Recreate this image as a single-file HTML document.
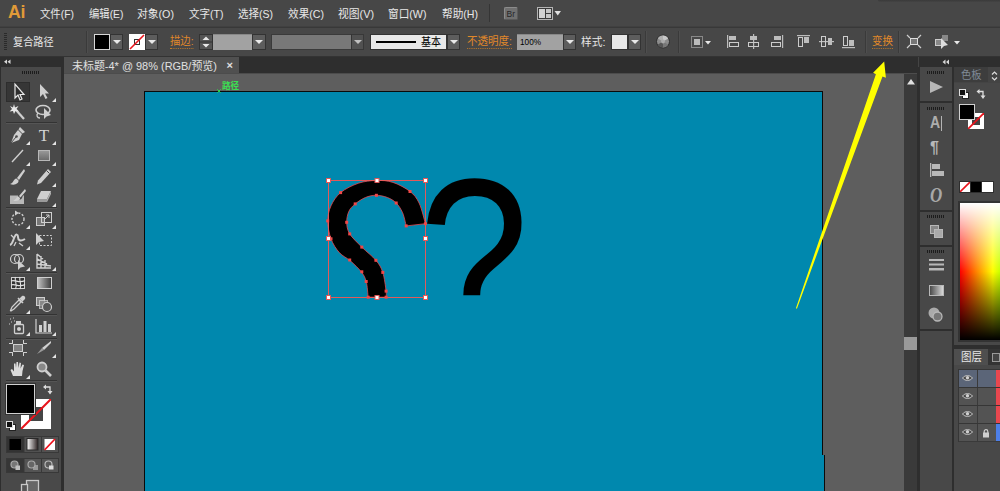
<!DOCTYPE html>
<html lang="zh-CN">
<head>
<meta charset="utf-8">
<title>Illustrator</title>
<style>
html,body{margin:0;padding:0;}
body{width:1000px;height:491px;overflow:hidden;background:#5e5e5e;position:relative;
 font-family:"Liberation Sans","Noto Sans CJK SC",sans-serif;font-size:11px;color:#e6e6e6;}
.a{position:absolute;}
.t{position:absolute;white-space:nowrap;line-height:14px;}
#menubar{left:0;top:0;width:1000px;height:27px;background:#474747;}
#ctrlbar{left:0;top:28px;width:1000px;height:28px;background:#474747;}
.menu{top:7px;font-size:11.5px;color:#e8e8e8;}
.or{color:#e0882a;border-bottom:1px dotted #c07a2a;line-height:13px;}
.sep{position:absolute;top:31px;width:1px;height:22px;background:#3a3a3a;border-right:1px solid #4e4e4e;}
.dd{position:absolute;background:#5d5d5d;border:1px solid #333;box-sizing:border-box;}
.dd:after{content:"";position:absolute;left:50%;top:50%;margin:-2px 0 0 -4px;border:4px solid transparent;border-top:4px solid #e8e8e8;border-bottom:0;}
.tool{position:absolute;width:24px;height:22px;}
.corner{position:absolute;width:0;height:0;border:2px solid transparent;border-right-color:#e4e4e4;border-bottom-color:#e4e4e4;margin:-1px 0 0 -1.5px;}
.grip{position:absolute;height:3px;width:18px;background:repeating-linear-gradient(90deg,#1c1c1c 0 1px,transparent 1px 2px);}
.hline{position:absolute;height:1px;background:#333;border-bottom:1px solid #555;}
</style>
</head>
<body>
<!-- canvas area -->
<div class="a" id="canvas" style="left:64px;top:74px;width:839px;height:417px;background:#5e5e5e;"></div>
<div class="a" id="artboard" style="left:144px;top:91px;width:677px;height:410px;background:#0088ae;border:1px solid #0a0a0a;"></div>
<div class="a" style="left:822px;top:455px;width:2px;height:40px;background:#0088ae;border-right:1px solid #0a0a0a;"></div>

<!-- artwork -->
<div class="a" style="left:400px;top:150px;width:150px;height:147.5px;overflow:hidden;"><div class="a" style="left:18.1px;top:-2.9px;font-family:'Liberation Sans',sans-serif;font-size:212px;line-height:212px;color:#000;transform:matrix(0.9325,0,0.02,1.0736,0,0);transform-origin:0 33px;">?</div></div>
<svg class="a" style="left:0;top:0;" width="1000" height="491" viewBox="0 0 1000 491">
<path d="M425.4 223.7 C424.4 220.2 421.7 208.4 419.1 203.0 C416.5 197.7 414.4 194.9 410.0 191.5 C405.7 188.0 398.5 184.2 392.9 182.4 C387.3 180.6 382.2 180.3 376.4 180.5 C370.7 180.6 364.5 181.2 358.5 183.2 C352.6 185.2 345.2 188.8 340.6 192.6 C336.1 196.3 333.2 201.1 331.0 205.8 C328.9 210.5 327.7 215.4 327.7 220.9 C327.7 226.4 329.1 233.5 331.0 238.8 C332.9 244.1 336.1 248.9 339.3 252.6 C342.5 256.2 346.6 257.6 350.3 260.8 C353.9 264.0 358.6 268.4 361.3 271.8 C363.9 275.3 365.1 277.3 366.2 281.5 C367.4 285.7 367.8 294.6 368.2 297.2 L386.1 297.2 C386.1 296.2 386.6 295.2 386.1 291.1 C385.5 287.0 384.5 277.5 382.8 272.4 C381.1 267.3 379.4 264.5 375.9 260.3 C372.4 256.1 366.2 251.5 361.8 247.1 C357.5 242.7 352.3 238.0 349.7 233.9 C347.2 229.7 346.8 226.1 346.7 222.3 C346.6 218.5 347.5 214.4 348.9 211.3 C350.3 208.2 352.5 206.2 355.2 203.9 C358.0 201.6 362.0 198.9 365.4 197.5 C368.9 196.1 372.2 195.3 375.9 195.3 C379.5 195.3 384.0 196.2 387.4 197.5 C390.8 198.8 393.7 200.5 396.2 203.0 C398.8 205.6 400.9 208.9 402.6 212.7 C404.2 216.5 405.6 223.7 406.2 225.9 Z" fill="#000" stroke="#e8474f" stroke-width="0.8"/>
<rect x="328.500" y="180.500" width="97" height="117" fill="none" stroke="#e25a5a" stroke-width="1"/>
<rect x="339.1" y="191.1" width="3" height="3" fill="#f04848"/>
<rect x="374.9" y="193.8" width="3" height="3" fill="#f04848"/>
<rect x="353.7" y="202.4" width="3" height="3" fill="#f04848"/>
<rect x="394.7" y="201.5" width="3" height="3" fill="#f04848"/>
<rect x="408.5" y="190.0" width="3" height="3" fill="#f04848"/>
<rect x="326.2" y="219.4" width="3" height="3" fill="#f04848"/>
<rect x="345.2" y="220.8" width="3" height="3" fill="#f04848"/>
<rect x="329.5" y="237.3" width="3" height="3" fill="#f04848"/>
<rect x="348.2" y="232.4" width="3" height="3" fill="#f04848"/>
<rect x="404.7" y="224.4" width="3" height="3" fill="#f04848"/>
<rect x="423.9" y="222.2" width="3" height="3" fill="#f04848"/>
<rect x="360.3" y="245.6" width="3" height="3" fill="#f04848"/>
<rect x="348.2" y="258.5" width="3" height="3" fill="#f04848"/>
<rect x="374.4" y="258.8" width="3" height="3" fill="#f04848"/>
<rect x="360.3" y="270.3" width="3" height="3" fill="#f04848"/>
<rect x="381.3" y="270.9" width="3" height="3" fill="#f04848"/>
<rect x="364.7" y="280.0" width="3" height="3" fill="#f04848"/>
<rect x="384.6" y="289.6" width="3" height="3" fill="#f04848"/>
<rect x="366.7" y="295.7" width="3" height="3" fill="#f04848"/>
<rect x="384.6" y="295.7" width="3" height="3" fill="#f04848"/>
<rect x="326.5" y="178.5" width="4" height="4" fill="#fff" stroke="#e25a5a" stroke-width="1"/>
<rect x="326.5" y="236.5" width="4" height="4" fill="#fff" stroke="#e25a5a" stroke-width="1"/>
<rect x="326.5" y="295.5" width="4" height="4" fill="#fff" stroke="#e25a5a" stroke-width="1"/>
<rect x="375.0" y="178.5" width="4" height="4" fill="#fff" stroke="#e25a5a" stroke-width="1"/>
<rect x="375.0" y="295.5" width="4" height="4" fill="#fff" stroke="#e25a5a" stroke-width="1"/>
<rect x="423.5" y="178.5" width="4" height="4" fill="#fff" stroke="#e25a5a" stroke-width="1"/>
<rect x="423.5" y="236.5" width="4" height="4" fill="#fff" stroke="#e25a5a" stroke-width="1"/>
<rect x="423.5" y="295.5" width="4" height="4" fill="#fff" stroke="#e25a5a" stroke-width="1"/>
<path d="M217.3 89.3 L220.700 92.700 M220.700 89.300 L217.300 92.700" stroke="#2fe04a" stroke-width="0.9"/>
<text x="222" y="88.6" font-size="8.6" font-weight="bold" fill="#3be052" font-family="Liberation Sans,Noto Sans CJK SC,sans-serif">路径</text>
</svg>
<!-- menubar -->
<div class="a" id="menubar"></div>
<div class="a" style="left:0;top:26px;width:1000px;height:1px;background:#404040;"></div><div class="a" style="left:0;top:27px;width:1000px;height:1px;background:#383838;"></div>
<div class="a" id="ctrlbar"></div>
<div class="a" style="left:878px;top:0;width:122px;height:2px;background:linear-gradient(180deg,#3a3a3a,#444);border-bottom-left-radius:3px;"></div>
<div class="a" style="left:0;top:56px;width:1000px;height:1px;background:#333;"></div>
<div class="t" style="left:7.5px;top:1px;font-size:19px;line-height:22px;font-weight:bold;color:#e09a38;letter-spacing:-0.2px;transform:scaleX(0.93);transform-origin:0 0;">Ai</div>
<div class="t menu" style="left:40.4px;transform:scaleX(0.902);transform-origin:0 0;">文件(F)</div>
<div class="t menu" style="left:89.0px;transform:scaleX(0.897);transform-origin:0 0;">编辑(E)</div>
<div class="t menu" style="left:137.4px;transform:scaleX(0.934);transform-origin:0 0;">对象(O)</div>
<div class="t menu" style="left:189.0px;transform:scaleX(0.915);transform-origin:0 0;">文字(T)</div>
<div class="t menu" style="left:238.0px;transform:scaleX(0.913);transform-origin:0 0;">选择(S)</div>
<div class="t menu" style="left:287.5px;transform:scaleX(0.924);transform-origin:0 0;">效果(C)</div>
<div class="t menu" style="left:337.5px;transform:scaleX(0.939);transform-origin:0 0;">视图(V)</div>
<div class="t menu" style="left:388.0px;transform:scaleX(0.927);transform-origin:0 0;">窗口(W)</div>
<div class="t menu" style="left:442.0px;transform:scaleX(0.924);transform-origin:0 0;">帮助(H)</div>

<!-- control bar items -->
<div class="t" style="left:13.0px;top:35px;font-size:11.5px;color:#e8e8e8;transform:scaleX(0.883);transform-origin:0 0;">复合路径</div>


<!-- control bar widgets -->
<div class="a" style="left:4px;top:33px;width:3px;height:18px;background:repeating-linear-gradient(180deg,#2a2a2a 0 1px,transparent 1px 2px);"></div>
<div class="sep" style="left:86px;"></div>
<div class="a" style="left:94px;top:34px;width:14px;height:14px;background:#000;border:1px solid #d8d8d8;"></div>
<div class="dd" style="left:110px;top:34px;width:13px;height:16px;"></div>
<div class="a" style="left:129px;top:34px;width:16px;height:16px;background:#fff;"><svg width="16" height="16" style="display:block"><rect x="5.5" y="5.5" width="5" height="5" fill="none" stroke="#333" stroke-width="1"/><line x1="1" y1="15" x2="15" y2="1" stroke="#e8141c" stroke-width="1.6"/></svg></div>
<div class="dd" style="left:145px;top:34px;width:13px;height:16px;"></div>
<div class="t or" style="left:170.0px;top:35px;font-size:11.5px;transform:scaleX(0.901);transform-origin:0 0;">描边:</div>
<div class="a" style="left:199px;top:34px;width:14px;height:16px;background:#555;border:1px solid #333;box-sizing:border-box;"><svg width="12" height="14" style="display:block"><rect x="0" y="6.5" width="12" height="1" fill="#333"/><path d="M2.5 5 L6 1.5 L9.5 5Z M2.5 9 L6 12.5 L9.5 9Z" fill="#e8e8e8"/></svg></div>
<div class="a" style="left:213px;top:34px;width:39px;height:16px;background:#a2a2a2;box-shadow:inset 0 1px 0 #888;"></div>
<div class="dd" style="left:252px;top:34px;width:14px;height:16px;"></div>
<div class="a" style="left:271px;top:34px;width:81px;height:16px;background:#787878;border:1px solid #3a3a3a;box-sizing:border-box;"></div>
<div class="dd" style="left:351px;top:34px;width:13px;height:16px;background:#555;opacity:.75"></div>
<div class="a" style="left:370px;top:34px;width:77px;height:16px;background:#e8e8e8;border:1px solid #333;box-sizing:border-box;"></div>
<div class="a" style="left:376px;top:41px;width:40px;height:1.5px;background:#000;"></div>
<div class="t" style="left:421.0px;top:35px;font-size:11.5px;color:#000;transform:scaleX(0.870);transform-origin:0 0;">基本</div>
<div class="dd" style="left:447px;top:34px;width:13px;height:16px;"></div>
<div class="t or" style="left:467.0px;top:35px;font-size:11.5px;transform:scaleX(0.915);transform-origin:0 0;">不透明度:</div>
<div class="a" style="left:517px;top:34px;width:46px;height:16px;background:#a2a2a2;box-shadow:inset 0 1px 0 #888;"></div>
<div class="t" style="left:520.0px;top:34.5px;font-size:9.5px;color:#000;transform:scaleX(0.865);transform-origin:0 0;">100%</div>
<div class="dd" style="left:563px;top:34px;width:13px;height:16px;"></div>
<div class="t" style="left:581.0px;top:35px;font-size:11.5px;color:#e8e8e8;transform:scaleX(0.931);transform-origin:0 0;">样式:</div>
<div class="a" style="left:611px;top:34px;width:17px;height:16px;background:#e8e8e8;border:1px solid #333;box-sizing:border-box;"></div>
<div class="dd" style="left:628px;top:34px;width:13px;height:16px;"></div>
<div class="sep" style="left:645px;"></div>
<svg class="a" style="left:655px;top:33px;" width="16" height="16"><circle cx="8" cy="8.5" r="6.5" fill="#8c8c8c" stroke="#2e2e2e"/><path d="M8 8.5 L8 2.5 A6 6 0 0 1 13.2 5.5Z" fill="#c8c8c8"/><path d="M8 8.5 L2.8 5.5 A6 6 0 0 1 8 2.5Z" fill="#b0b0b0"/><path d="M8 8.5 L13.2 11.5 A6 6 0 0 1 8 14.5Z" fill="#777"/><path d="M8 8.5 L2.8 11.5 A6 6 0 0 0 8 14.5Z" fill="#555"/><circle cx="8" cy="8.5" r="2" fill="#aaa"/></svg>
<div class="sep" style="left:678px;"></div>
<svg class="a" style="left:688px;top:33px;" width="26" height="18"><rect x="3.5" y="3.5" width="11" height="11" fill="none" stroke="#ccc" stroke-dasharray="1 1"/><rect x="6" y="6" width="6" height="6" fill="#bbb"/><path d="M17 8 L23 8 L20 11.5Z" fill="#e8e8e8"/></svg>
<!-- align icons -->
<svg class="a" style="left:725px;top:33px;" width="140" height="18" fill="#bdbdbd" stroke="none">
 <rect x="2" y="2" width="1.2" height="13"/><rect x="4" y="3" width="7" height="4"/><rect x="4.5" y="9.500" width="9" height="4" fill="none" stroke="#ccc"/>
 <rect x="28" y="1" width="1.2" height="15"/><rect x="25" y="3" width="7" height="4"/><rect x="23.500" y="9.500" width="10" height="4" fill="none" stroke="#ccc"/>
 <rect x="57" y="2" width="1.2" height="13"/><rect x="49" y="3" width="7" height="4"/><rect x="46.500" y="9.500" width="9" height="4" fill="none" stroke="#ccc"/>
 <rect x="72" y="2" width="13" height="1.2"/><rect x="79" y="4" width="5" height="6"/><rect x="73.500" y="4.500" width="4" height="9" fill="none" stroke="#ccc"/>
 <rect x="94" y="8" width="15" height="1.2"/><rect x="103" y="5" width="4" height="7"/><rect x="96.500" y="3.500" width="4" height="10" fill="none" stroke="#ccc"/>
 <rect x="117" y="14" width="13" height="1.2"/><rect x="124" y="7" width="5" height="6"/><rect x="118.500" y="3.500" width="4" height="9" fill="none" stroke="#ccc"/>
</svg>
<div class="sep" style="left:865px;"></div>
<div class="t or" style="left:872.0px;top:35px;font-size:11.5px;transform:scaleX(0.913);transform-origin:0 0;">变换</div>
<div class="sep" style="left:898px;"></div>
<svg class="a" style="left:906px;top:33px;" width="60" height="18"><rect x="4.500" y="5.500" width="7" height="6" fill="#777" stroke="#ddd"/><path d="M1 2 L4 5 M15 2 L12 5 M1 15 L4 12 M15 15 L12 12" stroke="#ccc" stroke-width="1.2"/>
 <rect x="29.500" y="6.500" width="6" height="6" fill="#888" stroke="#ccc"/><rect x="36" y="2" width="6" height="6" fill="#888"/><path d="M35 5 L35 16 L38 13 L42 12Z" fill="#ddd"/><path d="M48 8 L54 8 L51 11.500Z" fill="#e8e8e8"/></svg>
<!-- menubar right icons -->
<div class="a" style="left:489px;top:4px;width:1px;height:18px;background:#353535;"></div>
<div class="a" style="left:504px;top:7px;width:14px;height:13px;background:#707070;border:1px solid #8c8c8c;border-right-color:#5a5a5a;border-bottom-color:#5a5a5a;border-radius:2px;box-sizing:border-box;"></div>
<div class="t" style="left:506.5px;top:7.5px;font-size:8.5px;line-height:12px;color:#262626;">Br</div>
<svg class="a" style="left:537px;top:6px;" width="26" height="15"><rect x="0.5" y="1.5" width="15" height="12" fill="#3a3a3a" stroke="#b4b4b4"/><rect x="2" y="3" width="6" height="9" fill="#d2d2d2"/><rect x="9" y="3" width="5" height="4" fill="#c6c6c6"/><rect x="9" y="8" width="5" height="4" fill="#c6c6c6"/><path d="M17.5 5 L24 5 L20.750 9.500Z" fill="#e0e0e0"/></svg>

<!-- tab bar -->
<div class="a" style="left:62px;top:57px;width:858px;height:17px;background:#4c4c4c;"></div><div class="a" style="left:62px;top:57px;width:858px;height:16px;background:#2e2e2e;"></div>
<div class="a" style="left:64px;top:57px;width:175px;height:16px;background:#505050;"></div>
<div class="t" style="left:72.0px;top:59px;font-size:11.5px;color:#e0e0e0;transform:scaleX(0.952);transform-origin:0 0;">未标题-4* @ 98% (RGB/预览)</div>
<div class="t" style="left:226.5px;top:58px;font-size:11px;font-weight:bold;color:#e0e0e0;">×</div>

<!-- left toolbar -->
<div class="a" id="lpanel" style="left:0;top:57px;width:64px;height:434px;background:#2e2e2e;"></div>
<div class="a" style="left:1px;top:67px;width:60px;height:424px;background:#494949;"></div>

<!-- tools -->
<div class="a" style="left:0;top:57px;width:61px;height:10px;"><svg width="61" height="10" style="display:block"><path d="M7 2.500 L4 4.800 L7 7.100Z M10.500 2.500 L7.500 4.800 L10.500 7.100Z" fill="#d8d8d8"/></svg></div>
<div class="grip" style="left:22px;top:71px;"></div>
<div class="a" style="left:6px;top:82px;width:24px;height:20px;background:#363636;box-shadow:inset 0 0 0 1px #2d2d2d;"></div>
<div class="hline" style="left:6px;top:122px;width:51px;"></div>
<div class="hline" style="left:6px;top:207px;width:51px;"></div>
<div class="hline" style="left:6px;top:272px;width:51px;"></div>
<div class="hline" style="left:6px;top:314px;width:51px;"></div>
<div class="hline" style="left:6px;top:338px;width:51px;"></div>
<div class="hline" style="left:6px;top:380px;width:51px;"></div>
<svg class="a" style="left:7px;top:82px;" width="22" height="20" viewBox="0 0 22 20"><path d="M8 2 L8 16 L11 13 L13 18 L15 17 L13 12.500 L17 12.500Z" fill="#2e2e2e" stroke="#e8e8e8" stroke-width="1.2"/></svg>
<svg class="a" style="left:33px;top:82px;" width="22" height="20" viewBox="0 0 22 20"><path d="M7 2 L7 15 L10 12 L12.500 17 L14.500 16 L12 11.500 L16 11.500Z" fill="#cfcfcf"/></svg>
<div class="corner" style="left:53px;top:99px;"></div>
<svg class="a" style="left:7px;top:102px;" width="22" height="20" viewBox="0 0 22 20"><path d="M9 8 L17 17" stroke="#cfcfcf" stroke-width="2.2"/><path d="M7 2 L8 5.500 L11.500 4 L9.500 7 L12 9.500 L8.500 9 L7 12 L6 9 L2.500 9.500 L5 7 L3 4 L6 5.500Z" fill="#e8e8e8"/></svg>
<svg class="a" style="left:33px;top:102px;" width="22" height="20" viewBox="0 0 22 20"><ellipse cx="10" cy="8" rx="7" ry="4.500" fill="none" stroke="#cfcfcf" stroke-width="1.600"/><path d="M5 11 C3 13 4 16 7 16" fill="none" stroke="#cfcfcf" stroke-width="1.300"/><path d="M11 6 L11 17 L13.500 14.500 L18 13Z" fill="#cfcfcf"/></svg>
<svg class="a" style="left:7px;top:125px;" width="22" height="20" viewBox="0 0 22 20"><path d="M13 2 L18 7 L15.500 8.500 L11.500 4.500Z" fill="#cfcfcf"/><path d="M11 5 L15 9 L12 15 L4 18 L7 10Z" fill="#cfcfcf"/><circle cx="9.500" cy="11.500" r="1.300" fill="#494949"/><path d="M4 18 L9 12" stroke="#494949" stroke-width="1"/></svg>
<div class="corner" style="left:27px;top:142px;"></div>
<svg class="a" style="left:33px;top:125px;" width="22" height="20" viewBox="0 0 22 20"><text x="11" y="16" font-family="Liberation Serif,serif" font-size="17" fill="#d4d4d4" text-anchor="middle">T</text></svg>
<div class="corner" style="left:53px;top:142px;"></div>
<svg class="a" style="left:7px;top:146px;" width="22" height="20" viewBox="0 0 22 20"><path d="M5 16 L16 4" stroke="#cfcfcf" stroke-width="1.400"/></svg>
<div class="corner" style="left:27px;top:163px;"></div>
<svg class="a" style="left:33px;top:146px;" width="22" height="20" viewBox="0 0 22 20"><defs><linearGradient id="gr0" x2="0" y2="1"><stop offset="0" stop-color="#9a9a9a"/><stop offset="1" stop-color="#6a6a6a"/></linearGradient></defs><rect x="5.500" y="4.500" width="11" height="10" fill="url(#gr0)" stroke="#b8b8b8"/></svg>
<div class="corner" style="left:53px;top:163px;"></div>
<svg class="a" style="left:7px;top:167px;" width="22" height="20" viewBox="0 0 22 20"><path d="M17 2 L10 11 L12 13 L18 4Z" fill="#cfcfcf"/><path d="M9.500 11.500 C6 12 7 16 3 17 C8 19 12 16 11.500 13.500Z" fill="#cfcfcf"/></svg>
<svg class="a" style="left:33px;top:167px;" width="22" height="20" viewBox="0 0 22 20"><path d="M15 2 L18 5 L8 16 L4 17.500 L5 13.500Z" fill="#cfcfcf"/><path d="M13.500 3.500 L16.500 6.500" stroke="#494949" stroke-width="1"/></svg>
<div class="corner" style="left:53px;top:184px;"></div>
<svg class="a" style="left:7px;top:187px;" width="22" height="20" viewBox="0 0 22 20"><path d="M3 8.500 L11 8.500 L11 11 C11 13 14 13 15 11 L16 8.500 L17 8.500 L17 17 L3 17Z" fill="#b8b8b8"/><path d="M18 2 L12 9 L13.500 10.500 L19 4Z" fill="#cfcfcf"/><path d="M11.500 9.500 C9 10 9 13 6 13.500 C10 15 13.500 13 13 11Z" fill="#cfcfcf"/></svg>
<svg class="a" style="left:33px;top:187px;" width="22" height="20" viewBox="0 0 22 20"><path d="M8 4 L18 4 L14 12 L4 12Z" fill="#cfcfcf"/><path d="M4 12 L14 12 L14 15 L4 15Z" fill="#9a9a9a"/><path d="M14 12 L18 4 L18 7 L14 15Z" fill="#b0b0b0"/></svg>
<div class="corner" style="left:53px;top:204px;"></div>
<svg class="a" style="left:7px;top:209px;" width="22" height="20" viewBox="0 0 22 20"><circle cx="11" cy="10" r="6" fill="none" stroke="#cfcfcf" stroke-width="1.400" stroke-dasharray="2 1.500"/><path d="M8 1.500 L12 4 L8 6.500Z" fill="#cfcfcf"/></svg>
<div class="corner" style="left:27px;top:226px;"></div>
<svg class="a" style="left:33px;top:209px;" width="22" height="20" viewBox="0 0 22 20"><rect x="3.500" y="8.500" width="8" height="8" fill="#777" stroke="#cfcfcf"/><rect x="8.500" y="3.500" width="10" height="10" fill="none" stroke="#cfcfcf"/><path d="M12 10 L16 6 M13 6 L16 6 L16 9" stroke="#cfcfcf" fill="none"/></svg>
<div class="corner" style="left:53px;top:226px;"></div>
<svg class="a" style="left:7px;top:230px;" width="22" height="20" viewBox="0 0 22 20"><path d="M3 15 C6 14 6 9 8 6 C9 4 11 4 11 7 C11 10 13 12 18 9" fill="none" stroke="#cfcfcf" stroke-width="2"/><path d="M4 5 L7 8 M12 13 L16 16 M9 12 L7 16" stroke="#cfcfcf" stroke-width="1.300"/></svg>
<div class="corner" style="left:27px;top:247px;"></div>
<svg class="a" style="left:33px;top:230px;" width="22" height="20" viewBox="0 0 22 20"><rect x="6.500" y="5.500" width="12" height="10" fill="none" stroke="#cfcfcf" stroke-dasharray="2 1.500"/><path d="M3 3 L3 15 L6 12 L11 11Z" fill="#cfcfcf"/></svg>
<svg class="a" style="left:7px;top:251px;" width="22" height="20" viewBox="0 0 22 20"><circle cx="8" cy="8" r="4.500" fill="none" stroke="#cfcfcf" stroke-width="1.200"/><circle cx="12" cy="8" r="4.500" fill="none" stroke="#cfcfcf" stroke-width="1.200"/><path d="M11 9 L11 19 L13.500 16.500 L18 15.500Z" fill="#cfcfcf"/></svg>
<div class="corner" style="left:27px;top:268px;"></div>
<svg class="a" style="left:33px;top:251px;" width="22" height="20" viewBox="0 0 22 20"><path d="M4 3 L4 17 L18 17 M8 5 L8 17 M12 9 L12 17 M4 13 L18 15 M4 8 L14 13 M4 3 L10 8" fill="none" stroke="#cfcfcf" stroke-width="1.400"/></svg>
<div class="corner" style="left:53px;top:268px;"></div>
<svg class="a" style="left:7px;top:273px;" width="22" height="20" viewBox="0 0 22 20"><rect x="4.5" y="4.5" width="13" height="11" fill="#333" stroke="#cfcfcf"/><path d="M4 8 C8 6 12 11 18 7.5 M4 12 C8 10 12 15 18 11.5 M8.500 4 C7 8 11 11 8.500 16 M13 4 C11.500 8 15.500 11 13 16" fill="none" stroke="#e0e0e0" stroke-width="1.1"/></svg>
<svg class="a" style="left:33px;top:273px;" width="22" height="20" viewBox="0 0 22 20"><defs><linearGradient id="gr1"><stop offset="0" stop-color="#c4c4c4"/><stop offset="1" stop-color="#3a3a3a"/></linearGradient></defs><rect x="4.500" y="4.500" width="14" height="11" fill="url(#gr1)" stroke="#cfcfcf"/></svg>
<svg class="a" style="left:7px;top:294px;" width="22" height="20" viewBox="0 0 22 20"><path d="M15 2 C17 1 19 3 18 5 L15.500 7.500 L12.500 4.500Z" fill="#cfcfcf"/><path d="M12 6 L14 8 L7 15 L4 17 L3.500 16.500 L5 13Z" fill="none" stroke="#cfcfcf" stroke-width="1.300"/><path d="M11 4 L16 9" stroke="#cfcfcf" stroke-width="1.600"/></svg>
<div class="corner" style="left:27px;top:311px;"></div>
<svg class="a" style="left:33px;top:294px;" width="22" height="20" viewBox="0 0 22 20"><rect x="3.500" y="3.500" width="8" height="8" fill="#888" stroke="#cfcfcf"/><rect x="6.500" y="6.500" width="8" height="8" fill="#888" stroke="#cfcfcf" opacity=".8"/><circle cx="14" cy="13" r="4.500" fill="#555" stroke="#cfcfcf" stroke-width="1.200"/></svg>
<svg class="a" style="left:7px;top:316px;" width="22" height="20" viewBox="0 0 22 20"><rect x="7.500" y="8.500" width="9" height="9" rx="1" fill="none" stroke="#cfcfcf" stroke-width="1.300"/><rect x="9" y="5" width="5" height="3" fill="#cfcfcf"/><circle cx="12" cy="13" r="2" fill="#cfcfcf"/><path d="M3 3 h1 M6 2 h1 M4 6 h1 M7 5 h1 M2 8 h1" stroke="#cfcfcf"/></svg>
<div class="corner" style="left:27px;top:333px;"></div>
<svg class="a" style="left:33px;top:316px;" width="22" height="20" viewBox="0 0 22 20"><path d="M3 3 L3 17 L19 17" fill="none" stroke="#cfcfcf" stroke-width="1.200"/><rect x="6" y="9" width="3" height="7" fill="#cfcfcf"/><rect x="10.500" y="5" width="3" height="11" fill="#cfcfcf"/><rect x="15" y="8" width="3" height="8" fill="#cfcfcf"/></svg>
<div class="corner" style="left:53px;top:333px;"></div>
<svg class="a" style="left:7px;top:338px;" width="22" height="20" viewBox="0 0 22 20"><rect x="6.5" y="6.5" width="9" height="7" fill="#808080" stroke="#cfcfcf"/><path d="M2 5.500 h4 M16 5.500 h4 M2 14.500 h4 M16 14.500 h4 M5.500 2 v4 M16.500 2 v4 M5.500 14 v4 M16.500 14 v4" stroke="#cfcfcf"/></svg>
<svg class="a" style="left:33px;top:338px;" width="22" height="20" viewBox="0 0 22 20"><path d="M18 3 L9 10 L11 12 L18 5Z" fill="#cfcfcf"/><path d="M9 10 L4 16 L11 12Z" fill="#9a9a9a"/></svg>
<div class="corner" style="left:53px;top:355px;"></div>
<svg class="a" style="left:7px;top:359px;" width="22" height="20" viewBox="0 0 22 20"><path d="M6 17 L3.500 11 L5 10 L7 12.500 L7 4.500 L8.500 4.500 L9 9 L9.500 3 L11 3 L11.500 9 L12.500 3.500 L14 4 L13.500 9.500 L15.500 5.500 L17 6 L15.500 12 L15 17Z" fill="#dcdcdc"/></svg>
<div class="corner" style="left:27px;top:376px;"></div>
<svg class="a" style="left:33px;top:359px;" width="22" height="20" viewBox="0 0 22 20"><circle cx="9" cy="8" r="4.500" fill="#888" stroke="#cfcfcf" stroke-width="1.800"/><path d="M12.500 11.500 L18 17" stroke="#cfcfcf" stroke-width="2.600"/></svg>
<div class="a" style="left:21px;top:399px;width:30px;height:30px;background:#fff;"><svg width="30" height="30" style="display:block"><rect x="8" y="8" width="14" height="14" fill="#454545"/><line x1="0" y1="30" x2="30" y2="0" stroke="#e8141c" stroke-width="2"/></svg></div>
<div class="a" style="left:6px;top:384px;width:27px;height:28px;background:#000;border:1px solid #d0d0d0;box-shadow:0 0 0 1px #333;"></div>
<svg class="a" style="left:41px;top:383px;" width="14" height="14"><path d="M3 4 L9 4 L9 10" fill="none" stroke="#ddd" stroke-width="1.300"/><path d="M5 1.500 L2 4 L5 6.500Z M6.500 8 L9 11.500 L11.500 8Z" fill="#ddd"/></svg>
<svg class="a" style="left:5px;top:420px;" width="12" height="12"><rect x="4.500" y="4.500" width="6" height="6" fill="#fff" stroke="#222"/><rect x="1.500" y="1.500" width="6" height="6" fill="#111" stroke="#ddd"/></svg>
<svg class="a" style="left:6px;top:436px;" width="53" height="56" viewBox="0 0 53 56">
<rect x="0" y="0" width="53" height="17" fill="#383838"/>
<rect x="1" y="1" width="16.500" height="15" fill="#333"/><rect x="18.500" y="1" width="16.500" height="15" fill="#515151"/><rect x="36" y="1" width="16" height="15" fill="#515151"/>
<rect x="3.500" y="3" width="11.500" height="11" fill="#000"/>
<defs><linearGradient id="gr3"><stop offset="0" stop-color="#fff"/><stop offset="1" stop-color="#2a2020"/></linearGradient></defs>
<rect x="21" y="2.500" width="11" height="11.500" fill="url(#gr3)" stroke="#2a2a2a" stroke-width="1"/>
<rect x="38.500" y="3" width="10.500" height="11" fill="#fff"/><line x1="38.500" y1="14" x2="49" y2="3" stroke="#f0101c" stroke-width="1.800"/>
<rect x="0" y="22" width="53" height="15" fill="#383838"/>
<rect x="1" y="23" width="16.500" height="13" fill="#363636"/><rect x="18.500" y="23" width="16.500" height="13" fill="#545454"/><rect x="36" y="23" width="16" height="13" fill="#545454"/>
<circle cx="8.500" cy="28.500" r="3.500" fill="#777" stroke="#aaa" stroke-width="1.200"/><rect x="9.500" y="29.500" width="4.500" height="4.500" fill="#c0c0c0"/>
<rect x="27" y="29" width="5" height="5" fill="#999"/><circle cx="25.500" cy="28.500" r="3.500" fill="#666" stroke="#aaa" stroke-width="1.200"/>
<circle cx="42.500" cy="28.500" r="3.500" fill="#5a5a5a" stroke="#bbb" stroke-width="1.200"/><rect x="43" y="29.500" width="4.500" height="4" fill="#ddd"/>
<rect x="20.500" y="44.500" width="12" height="12" fill="#666" stroke="#c8c8c8" stroke-width="1.300"/>
<rect x="15.500" y="48.500" width="6" height="8" fill="#555" stroke="#c8c8c8" stroke-width="1.300"/>
</svg>

<!-- right side -->
<div class="a" id="vscroll" style="left:904px;top:74px;width:13px;height:417px;background:#3a3a3a;"></div>
<div class="a" style="left:917px;top:57px;width:83px;height:434px;background:#2e2e2e;"></div><div class="a" style="left:918px;top:57px;width:1px;height:10px;background:#444;"></div>
<div class="a" style="left:920px;top:67px;width:32px;height:424px;background:#484848;"></div>
<div class="a" style="left:954px;top:67px;width:46px;height:424px;background:#484848;"></div>

<svg class="a" style="left:903.5px;top:74px;" width="14" height="14"><path d="M3 10.500 L7 5 L11 10.500Z" fill="#e0e0e0"/></svg>
<div class="a" style="left:904px;top:337px;width:13px;height:13px;background:#9a9a9a;"></div>
<svg class="a" style="left:940px;top:57px;" width="14" height="10"><path d="M5.5 2.5 L2.5 5 L5.5 7.5Z M9 2.5 L6 5 L9 7.5Z" fill="#d8d8d8"/></svg>
<div class="a" style="left:920px;top:101px;width:32px;height:2px;background:#2e2e2e;"></div>
<div class="a" style="left:920px;top:210px;width:32px;height:2px;background:#2e2e2e;"></div>
<div class="a" style="left:920px;top:245px;width:32px;height:2px;background:#2e2e2e;"></div>
<div class="a" style="left:920px;top:329px;width:32px;height:2px;background:#2e2e2e;"></div>
<div class="grip" style="left:927px;top:71px;"></div>
<div class="grip" style="left:927px;top:107px;"></div>
<div class="grip" style="left:927px;top:215px;"></div>
<div class="grip" style="left:927px;top:250px;"></div>
<svg class="a" style="left:925px;top:77px;" width="22" height="20" viewBox="0 0 22 20"><path d="M5 4 L18 10 L5 16Z" fill="#b8b8b8"/></svg>
<div class="t" style="left:930px;top:114px;font-size:16px;line-height:18px;color:#adadad;font-weight:bold;transform:scaleX(.88);transform-origin:0 0;">A</div><div class="a" style="left:941px;top:116px;width:1px;height:15px;background:#b4b4b4;"></div>
<div class="t" style="left:930px;top:139px;font-size:16px;line-height:18px;color:#b8b8b8;font-weight:bold;">¶</div>
<svg class="a" style="left:925px;top:160px;" width="22" height="20" viewBox="0 0 22 20"><rect x="5" y="3" width="1.300" height="14" fill="#b8b8b8"/><rect x="7" y="4" width="8" height="5" fill="#b8b8b8"/><rect x="7" y="11" width="12" height="5" fill="#b8b8b8"/></svg>
<div class="t" style="left:930px;top:185px;font-family:'Liberation Serif',serif;font-style:italic;font-weight:bold;font-size:20px;line-height:20px;color:#a8a8a8;transform:scaleX(.85);transform-origin:0 0;">O</div>
<svg class="a" style="left:925px;top:221px;" width="22" height="20" viewBox="0 0 22 20"><rect x="5.500" y="4.500" width="8" height="8" fill="#888" stroke="#b8b8b8"/><rect x="9.500" y="8.500" width="8" height="8" fill="#aaa" stroke="#b8b8b8"/></svg>
<svg class="a" style="left:925px;top:255px;" width="22" height="20" viewBox="0 0 22 20"><rect x="4" y="4" width="15" height="2" fill="#b8b8b8"/><rect x="4" y="8.500" width="15" height="2" fill="#b8b8b8"/><rect x="4" y="13" width="15" height="2.500" fill="#b8b8b8"/></svg>
<svg class="a" style="left:925px;top:280px;" width="22" height="20" viewBox="0 0 22 20"><defs><linearGradient id="gr2"><stop offset="0" stop-color="#444"/><stop offset="1" stop-color="#ddd"/></linearGradient></defs><rect x="4.500" y="5.500" width="14" height="10" fill="url(#gr2)" stroke="#b8b8b8"/></svg>
<svg class="a" style="left:925px;top:305px;" width="22" height="20" viewBox="0 0 22 20"><circle cx="9" cy="8" r="5.500" fill="#aaa"/><circle cx="12.500" cy="11.500" r="4.500" fill="#777" stroke="#b8b8b8" stroke-width="1.300"/></svg>
<div class="a" style="left:954px;top:67px;width:46px;height:16px;background:#444;"></div>
<div class="a" style="left:954px;top:67px;width:34px;height:15px;background:#3d3d3d;"></div>
<div class="t" style="left:961.2px;top:68px;font-size:11.500px;color:#7f8a96;transform:scaleX(0.896);transform-origin:0 0;">色板</div>
<svg class="a" style="left:990px;top:70px;" width="9" height="12"><path d="M2 4.5 L4.5 2 L7 4.5 M2 7.5 L4.5 10 L7 7.5" fill="none" stroke="#ddd" stroke-width="1.2"/></svg>
<svg class="a" style="left:958px;top:88px;" width="12" height="12"><rect x="4.500" y="4.500" width="6" height="6" fill="#fff" stroke="#222"/><rect x="1.500" y="1.500" width="6" height="6" fill="#111" stroke="#ddd"/></svg>
<svg class="a" style="left:975px;top:87.5px;" width="12" height="12"><path d="M3 3.500 L8 3.500 L8 9" fill="none" stroke="#ddd" stroke-width="1.300"/><path d="M4.500 1 L1.500 3.500 L4.500 6Z M5.500 7.500 L8 11 L10.500 7.500Z" fill="#ddd"/></svg>
<div class="a" style="left:968px;top:113px;width:16px;height:16px;background:#fff;"><svg width="16" height="16" style="display:block"><rect x="4" y="4" width="8" height="8" fill="#444"/><line x1="0" y1="16" x2="16" y2="0" stroke="#e8141c" stroke-width="1.800"/></svg></div>
<div class="a" style="left:959px;top:104px;width:14px;height:14px;background:#000;border:1px solid #d0d0d0;"></div>
<div class="a" style="left:959px;top:181px;width:35px;height:12px;background:#2e2e2e;"></div>
<div class="a" style="left:960px;top:182px;width:10px;height:10px;background:#fff;"><svg width="10" height="10" style="display:block"><line x1="0" y1="10" x2="10" y2="0" stroke="#e8141c" stroke-width="1.600"/></svg></div>
<div class="a" style="left:971px;top:182px;width:10px;height:10px;background:#000;"></div><div class="a" style="left:982px;top:182px;width:11px;height:10px;background:#fff;"></div>
<div class="a" style="left:958px;top:201px;width:42px;height:141px;background:#333;"></div><div class="a" style="left:960px;top:203px;width:40px;height:137px;background:linear-gradient(180deg,#fff 0,rgba(255,255,255,0) 50%,rgba(0,0,0,0) 50%,#000 100%),linear-gradient(90deg,#f00 0,#ff8000 40%,#ff0 82%,#c8ff00 100%);"></div>
<div class="a" style="left:954px;top:345px;width:46px;height:4px;background:#2e2e2e;"></div>
<div class="a" style="left:954px;top:349px;width:46px;height:16px;background:#343434;"></div>
<div class="a" style="left:954px;top:349px;width:34px;height:16px;background:#4e4e4e;"></div>
<div class="t" style="left:961.3px;top:350px;font-size:11.500px;color:#e8e8e8;transform:scaleX(0.909);transform-origin:0 0;">图层</div>
<div class="a" style="left:992px;top:353px;width:8px;height:9px;background:#444;border:1px solid #999;box-sizing:border-box;"></div>
<div class="a" style="left:958px;top:369px;width:42px;height:73px;background:#363636;"></div>
<div class="a" style="left:959px;top:370px;width:37px;height:17px;background:#5b6578;"></div>
<div class="a" style="left:977px;top:370px;width:1px;height:17px;background:#3a3a3a;"></div>
<div class="a" style="left:996px;top:370px;width:4px;height:17px;background:#e8474f;"></div>
<svg class="a" style="left:962px;top:374px;" width="11" height="8"><path d="M0.5 4 C3 0.8 8 0.8 10.5 4 C8 7.2 3 7.2 0.5 4Z" fill="#484848" stroke="#c8c8c8" stroke-width="1"/><circle cx="5.500" cy="3.800" r="1.700" fill="#d0d0d0"/></svg>
<div class="a" style="left:959px;top:388px;width:37px;height:17px;background:#535353;"></div>
<div class="a" style="left:977px;top:388px;width:1px;height:17px;background:#3a3a3a;"></div>
<div class="a" style="left:996px;top:388px;width:4px;height:17px;background:#e8474f;"></div>
<svg class="a" style="left:962px;top:392px;" width="11" height="8"><path d="M0.5 4 C3 0.8 8 0.8 10.5 4 C8 7.2 3 7.2 0.5 4Z" fill="#484848" stroke="#c8c8c8" stroke-width="1"/><circle cx="5.500" cy="3.800" r="1.700" fill="#d0d0d0"/></svg>
<div class="a" style="left:959px;top:406px;width:37px;height:17px;background:#535353;"></div>
<div class="a" style="left:977px;top:406px;width:1px;height:17px;background:#3a3a3a;"></div>
<div class="a" style="left:996px;top:406px;width:4px;height:17px;background:#e8474f;"></div>
<svg class="a" style="left:962px;top:410px;" width="11" height="8"><path d="M0.5 4 C3 0.8 8 0.8 10.5 4 C8 7.2 3 7.2 0.5 4Z" fill="#484848" stroke="#c8c8c8" stroke-width="1"/><circle cx="5.500" cy="3.800" r="1.700" fill="#d0d0d0"/></svg>
<div class="a" style="left:959px;top:424px;width:37px;height:17px;background:#535353;"></div>
<div class="a" style="left:977px;top:424px;width:1px;height:17px;background:#3a3a3a;"></div>
<div class="a" style="left:996px;top:424px;width:4px;height:17px;background:#4d7fe8;"></div>
<svg class="a" style="left:962px;top:428px;" width="11" height="8"><path d="M0.5 4 C3 0.8 8 0.8 10.5 4 C8 7.2 3 7.2 0.5 4Z" fill="#484848" stroke="#c8c8c8" stroke-width="1"/><circle cx="5.500" cy="3.800" r="1.700" fill="#d0d0d0"/></svg>
<svg class="a" style="left:982px;top:428px;" width="8" height="10"><path d="M2.200 5 V3.500 C2.200 1 5.800 1 5.800 3.500 V5" fill="none" stroke="#d0d0d0" stroke-width="1.200"/><rect x="1" y="4.500" width="6" height="5" fill="#d0d0d0"/></svg>
<div class="a" style="left:959px;top:441px;width:41px;height:1px;background:#3a3a3a;"></div>
<svg class="a" style="left:0;top:0;pointer-events:none;" width="1000" height="491" viewBox="0 0 1000 491"><polygon points="795.900,308.200 875.900,74.200 873.100,72.800 884.200,61.400 885.900,77.800 882.500,76.400 796.900,308.700" fill="#ffff00"/></svg>
</body>
</html>
